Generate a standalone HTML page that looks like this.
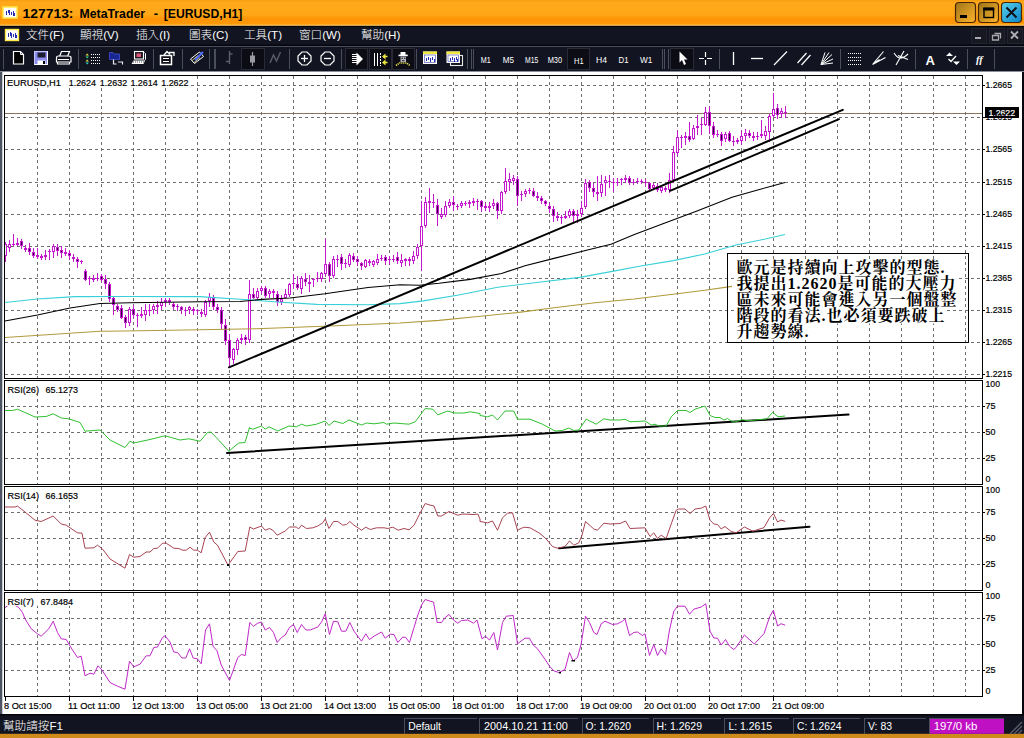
<!DOCTYPE html>
<html lang="zh-Hant"><head><meta charset="utf-8"><title>127713: MetaTrader - [EURUSD,H1]</title>
<style>
html,body{margin:0;padding:0;background:#121521;}
body{width:1024px;height:738px;overflow:hidden;position:relative;font-family:"Liberation Sans", "Noto Sans CJK TC", sans-serif;}
svg{position:absolute;left:0;top:0;display:block}
text{font-family:"Liberation Sans", "Noto Sans CJK TC", sans-serif;}
.ax{font-size:9.6px;fill:#000;stroke:#000;stroke-width:.2px}
.g{stroke:#6e6e6e;stroke-width:1;stroke-dasharray:3 3;shape-rendering:crispEdges;fill:none}
.b{stroke:#000;stroke-width:1;shape-rendering:crispEdges;fill:none}
.cw{fill:#c418cc;shape-rendering:crispEdges}
.ch{fill:#fff;stroke:#c418cc;stroke-width:1;shape-rendering:crispEdges}
.cf{fill:#c418cc;shape-rendering:crispEdges}
.ck{fill:#30003a;shape-rendering:crispEdges}
.tl{stroke:#000;stroke-width:2;stroke-linecap:round;fill:none}
.mn{font-size:11.6px;fill:#fff;font-weight:300}
.st{font-size:11.8px;fill:#fff}
.tf{font-size:9.6px;fill:#fff}
.sep{stroke:#4a4e5c;stroke-width:1;shape-rendering:crispEdges}
.note{font-family:"Liberation Serif","Noto Serif CJK SC",serif;font-weight:bold;font-size:16px;fill:#000;letter-spacing:1px}
</style></head><body>
<svg width="1024" height="738" viewBox="0 0 1024 738">
<defs>
<linearGradient id="tg" x1="0" y1="0" x2="0" y2="1"><stop offset="0" stop-color="#f79e10"/><stop offset="0.1" stop-color="#ffa91b"/><stop offset="0.6" stop-color="#ffa717"/><stop offset="0.68" stop-color="#fe9b0b"/><stop offset="0.78" stop-color="#fd9506"/><stop offset="1" stop-color="#ff9a08"/></linearGradient>
<linearGradient id="bg1" x1="0" y1="0" x2="1" y2="1"><stop offset="0" stop-color="#9c7418"/><stop offset="1" stop-color="#ffb42c"/></linearGradient>
<linearGradient id="bg2" x1="0" y1="0" x2="1" y2="1"><stop offset="0" stop-color="#58d0e8"/><stop offset="1" stop-color="#0c86cc"/></linearGradient>
</defs>

<rect x="0" y="0" width="1024" height="738" fill="#121521"/>
<rect x="0" y="0" width="1024" height="25" fill="url(#tg)"/><rect x="0" y="24.600" width="1024" height="1.300" fill="#ffc864"/><rect x="0" y="25.900" width="1024" height="1.100" fill="#050506"/>
<rect x="0" y="71" width="1024" height="643" fill="#fff"/>
<rect x="0" y="71" width="2" height="643" fill="#4e5464"/>
<rect x="2" y="71" width="1" height="643" fill="#c8ccd4"/>
<rect x="1022" y="71" width="2" height="643" fill="#06070c"/>
<rect x="0" y="71" width="1024" height="1" fill="#8a8e98"/>
<rect x="0" y="714" width="1024" height="20" fill="#121521"/>
<rect x="0" y="714" width="1024" height="1.500" fill="#050508"/><rect x="0" y="733.800" width="1024" height="5" fill="#cf8a1c"/>
<line class="g" x1="37.5" y1="76" x2="37.5" y2="378"/>
<line class="g" x1="69.5" y1="76" x2="69.5" y2="378"/>
<line class="g" x1="101.5" y1="76" x2="101.5" y2="378"/>
<line class="g" x1="133.5" y1="76" x2="133.5" y2="378"/>
<line class="g" x1="165.5" y1="76" x2="165.5" y2="378"/>
<line class="g" x1="197.5" y1="76" x2="197.5" y2="378"/>
<line class="g" x1="229.5" y1="76" x2="229.5" y2="378"/>
<line class="g" x1="261.5" y1="76" x2="261.5" y2="378"/>
<line class="g" x1="293.5" y1="76" x2="293.5" y2="378"/>
<line class="g" x1="325.5" y1="76" x2="325.5" y2="378"/>
<line class="g" x1="357.5" y1="76" x2="357.5" y2="378"/>
<line class="g" x1="389.5" y1="76" x2="389.5" y2="378"/>
<line class="g" x1="421.5" y1="76" x2="421.5" y2="378"/>
<line class="g" x1="453.5" y1="76" x2="453.5" y2="378"/>
<line class="g" x1="485.5" y1="76" x2="485.5" y2="378"/>
<line class="g" x1="517.5" y1="76" x2="517.5" y2="378"/>
<line class="g" x1="549.5" y1="76" x2="549.5" y2="378"/>
<line class="g" x1="581.5" y1="76" x2="581.5" y2="378"/>
<line class="g" x1="613.5" y1="76" x2="613.5" y2="378"/>
<line class="g" x1="645.5" y1="76" x2="645.5" y2="378"/>
<line class="g" x1="677.5" y1="76" x2="677.5" y2="378"/>
<line class="g" x1="709.5" y1="76" x2="709.5" y2="378"/>
<line class="g" x1="741.5" y1="76" x2="741.5" y2="378"/>
<line class="g" x1="773.5" y1="76" x2="773.5" y2="378"/>
<line class="g" x1="805.5" y1="76" x2="805.5" y2="378"/>
<line class="g" x1="837.5" y1="76" x2="837.5" y2="378"/>
<line class="g" x1="869.5" y1="76" x2="869.5" y2="378"/>
<line class="g" x1="901.5" y1="76" x2="901.5" y2="378"/>
<line class="g" x1="933.5" y1="76" x2="933.5" y2="378"/>
<line class="g" x1="965.5" y1="76" x2="965.5" y2="378"/>
<line class="g" x1="5" y1="85.5" x2="982" y2="85.5"/>
<line class="g" x1="5" y1="117.5" x2="982" y2="117.5"/>
<line class="g" x1="5" y1="149.5" x2="982" y2="149.5"/>
<line class="g" x1="5" y1="182.5" x2="982" y2="182.5"/>
<line class="g" x1="5" y1="214.5" x2="982" y2="214.5"/>
<line class="g" x1="5" y1="246.5" x2="982" y2="246.5"/>
<line class="g" x1="5" y1="278.5" x2="982" y2="278.5"/>
<line class="g" x1="5" y1="310.5" x2="982" y2="310.5"/>
<line class="g" x1="5" y1="342.5" x2="982" y2="342.5"/>
<line class="g" x1="5" y1="374.5" x2="982" y2="374.5"/>
<line class="g" x1="37.5" y1="381" x2="37.5" y2="484"/>
<line class="g" x1="69.5" y1="381" x2="69.5" y2="484"/>
<line class="g" x1="101.5" y1="381" x2="101.5" y2="484"/>
<line class="g" x1="133.5" y1="381" x2="133.5" y2="484"/>
<line class="g" x1="165.5" y1="381" x2="165.5" y2="484"/>
<line class="g" x1="197.5" y1="381" x2="197.5" y2="484"/>
<line class="g" x1="229.5" y1="381" x2="229.5" y2="484"/>
<line class="g" x1="261.5" y1="381" x2="261.5" y2="484"/>
<line class="g" x1="293.5" y1="381" x2="293.5" y2="484"/>
<line class="g" x1="325.5" y1="381" x2="325.5" y2="484"/>
<line class="g" x1="357.5" y1="381" x2="357.5" y2="484"/>
<line class="g" x1="389.5" y1="381" x2="389.5" y2="484"/>
<line class="g" x1="421.5" y1="381" x2="421.5" y2="484"/>
<line class="g" x1="453.5" y1="381" x2="453.5" y2="484"/>
<line class="g" x1="485.5" y1="381" x2="485.5" y2="484"/>
<line class="g" x1="517.5" y1="381" x2="517.5" y2="484"/>
<line class="g" x1="549.5" y1="381" x2="549.5" y2="484"/>
<line class="g" x1="581.5" y1="381" x2="581.5" y2="484"/>
<line class="g" x1="613.5" y1="381" x2="613.5" y2="484"/>
<line class="g" x1="645.5" y1="381" x2="645.5" y2="484"/>
<line class="g" x1="677.5" y1="381" x2="677.5" y2="484"/>
<line class="g" x1="709.5" y1="381" x2="709.5" y2="484"/>
<line class="g" x1="741.5" y1="381" x2="741.5" y2="484"/>
<line class="g" x1="773.5" y1="381" x2="773.5" y2="484"/>
<line class="g" x1="805.5" y1="381" x2="805.5" y2="484"/>
<line class="g" x1="837.5" y1="381" x2="837.5" y2="484"/>
<line class="g" x1="869.5" y1="381" x2="869.5" y2="484"/>
<line class="g" x1="901.5" y1="381" x2="901.5" y2="484"/>
<line class="g" x1="933.5" y1="381" x2="933.5" y2="484"/>
<line class="g" x1="965.5" y1="381" x2="965.5" y2="484"/>
<line class="g" x1="5" y1="406.5" x2="982" y2="406.5"/>
<line class="g" x1="5" y1="432.5" x2="982" y2="432.5"/>
<line class="g" x1="5" y1="458.5" x2="982" y2="458.5"/>
<line class="g" x1="37.5" y1="487" x2="37.5" y2="590"/>
<line class="g" x1="69.5" y1="487" x2="69.5" y2="590"/>
<line class="g" x1="101.5" y1="487" x2="101.5" y2="590"/>
<line class="g" x1="133.5" y1="487" x2="133.5" y2="590"/>
<line class="g" x1="165.5" y1="487" x2="165.5" y2="590"/>
<line class="g" x1="197.5" y1="487" x2="197.5" y2="590"/>
<line class="g" x1="229.5" y1="487" x2="229.5" y2="590"/>
<line class="g" x1="261.5" y1="487" x2="261.5" y2="590"/>
<line class="g" x1="293.5" y1="487" x2="293.5" y2="590"/>
<line class="g" x1="325.5" y1="487" x2="325.5" y2="590"/>
<line class="g" x1="357.5" y1="487" x2="357.5" y2="590"/>
<line class="g" x1="389.5" y1="487" x2="389.5" y2="590"/>
<line class="g" x1="421.5" y1="487" x2="421.5" y2="590"/>
<line class="g" x1="453.5" y1="487" x2="453.5" y2="590"/>
<line class="g" x1="485.5" y1="487" x2="485.5" y2="590"/>
<line class="g" x1="517.5" y1="487" x2="517.5" y2="590"/>
<line class="g" x1="549.5" y1="487" x2="549.5" y2="590"/>
<line class="g" x1="581.5" y1="487" x2="581.5" y2="590"/>
<line class="g" x1="613.5" y1="487" x2="613.5" y2="590"/>
<line class="g" x1="645.5" y1="487" x2="645.5" y2="590"/>
<line class="g" x1="677.5" y1="487" x2="677.5" y2="590"/>
<line class="g" x1="709.5" y1="487" x2="709.5" y2="590"/>
<line class="g" x1="741.5" y1="487" x2="741.5" y2="590"/>
<line class="g" x1="773.5" y1="487" x2="773.5" y2="590"/>
<line class="g" x1="805.5" y1="487" x2="805.5" y2="590"/>
<line class="g" x1="837.5" y1="487" x2="837.5" y2="590"/>
<line class="g" x1="869.5" y1="487" x2="869.5" y2="590"/>
<line class="g" x1="901.5" y1="487" x2="901.5" y2="590"/>
<line class="g" x1="933.5" y1="487" x2="933.5" y2="590"/>
<line class="g" x1="965.5" y1="487" x2="965.5" y2="590"/>
<line class="g" x1="5" y1="512.5" x2="982" y2="512.5"/>
<line class="g" x1="5" y1="538.5" x2="982" y2="538.5"/>
<line class="g" x1="5" y1="564.5" x2="982" y2="564.5"/>
<line class="g" x1="37.5" y1="593" x2="37.5" y2="696"/>
<line class="g" x1="69.5" y1="593" x2="69.5" y2="696"/>
<line class="g" x1="101.5" y1="593" x2="101.5" y2="696"/>
<line class="g" x1="133.5" y1="593" x2="133.5" y2="696"/>
<line class="g" x1="165.5" y1="593" x2="165.5" y2="696"/>
<line class="g" x1="197.5" y1="593" x2="197.5" y2="696"/>
<line class="g" x1="229.5" y1="593" x2="229.5" y2="696"/>
<line class="g" x1="261.5" y1="593" x2="261.5" y2="696"/>
<line class="g" x1="293.5" y1="593" x2="293.5" y2="696"/>
<line class="g" x1="325.5" y1="593" x2="325.5" y2="696"/>
<line class="g" x1="357.5" y1="593" x2="357.5" y2="696"/>
<line class="g" x1="389.5" y1="593" x2="389.5" y2="696"/>
<line class="g" x1="421.5" y1="593" x2="421.5" y2="696"/>
<line class="g" x1="453.5" y1="593" x2="453.5" y2="696"/>
<line class="g" x1="485.5" y1="593" x2="485.5" y2="696"/>
<line class="g" x1="517.5" y1="593" x2="517.5" y2="696"/>
<line class="g" x1="549.5" y1="593" x2="549.5" y2="696"/>
<line class="g" x1="581.5" y1="593" x2="581.5" y2="696"/>
<line class="g" x1="613.5" y1="593" x2="613.5" y2="696"/>
<line class="g" x1="645.5" y1="593" x2="645.5" y2="696"/>
<line class="g" x1="677.5" y1="593" x2="677.5" y2="696"/>
<line class="g" x1="709.5" y1="593" x2="709.5" y2="696"/>
<line class="g" x1="741.5" y1="593" x2="741.5" y2="696"/>
<line class="g" x1="773.5" y1="593" x2="773.5" y2="696"/>
<line class="g" x1="805.5" y1="593" x2="805.5" y2="696"/>
<line class="g" x1="837.5" y1="593" x2="837.5" y2="696"/>
<line class="g" x1="869.5" y1="593" x2="869.5" y2="696"/>
<line class="g" x1="901.5" y1="593" x2="901.5" y2="696"/>
<line class="g" x1="933.5" y1="593" x2="933.5" y2="696"/>
<line class="g" x1="965.5" y1="593" x2="965.5" y2="696"/>
<line class="g" x1="5" y1="618.5" x2="982" y2="618.5"/>
<line class="g" x1="5" y1="644.5" x2="982" y2="644.5"/>
<line class="g" x1="5" y1="670.5" x2="982" y2="670.5"/>
<line x1="5" y1="113.5" x2="982" y2="113.5" stroke="#8a7460" stroke-width="1" shape-rendering="crispEdges"/>
<rect class="cw" x="5" y="242" width="1" height="20"/>
<rect class="ch" x="4.5" y="244.5" width="2" height="11"/>
<rect class="cw" x="9" y="240" width="1" height="12"/>
<rect class="ch" x="8.5" y="244.5" width="2" height="3"/>
<rect class="cw" x="13" y="234" width="1" height="13"/>
<rect class="cf" x="12" y="244" width="3" height="1"/>
<rect class="cw" x="17" y="238" width="1" height="8"/>
<rect class="cf" x="16" y="243" width="3" height="2"/>
<rect class="cw" x="21" y="239" width="1" height="10"/>
<rect class="cf" x="20" y="241" width="3" height="5"/>
<rect class="ck" x="21" y="242" width="1" height="3"/>
<rect class="cw" x="25" y="245" width="1" height="7"/>
<rect class="cf" x="24" y="248" width="3" height="2"/>
<rect class="cw" x="29" y="243" width="1" height="12"/>
<rect class="cf" x="28" y="248" width="3" height="4"/>
<rect class="ck" x="29" y="249" width="1" height="2"/>
<rect class="cw" x="33" y="248" width="1" height="10"/>
<rect class="cf" x="32" y="252" width="3" height="4"/>
<rect class="ck" x="33" y="253" width="1" height="2"/>
<rect class="cw" x="37" y="248" width="1" height="11"/>
<rect class="cf" x="36" y="255" width="3" height="2"/>
<rect class="cw" x="41" y="254" width="1" height="6"/>
<rect class="cf" x="40" y="256" width="3" height="2"/>
<rect class="cw" x="45" y="250" width="1" height="10"/>
<rect class="cf" x="44" y="255" width="3" height="2"/>
<rect class="cw" x="49" y="249" width="1" height="11"/>
<rect class="cf" x="48" y="251" width="3" height="1"/>
<rect class="cw" x="53" y="244" width="1" height="14"/>
<rect class="ch" x="52.5" y="246.5" width="2" height="5"/>
<rect class="cw" x="57" y="244" width="1" height="12"/>
<rect class="cf" x="56" y="247" width="3" height="4"/>
<rect class="ck" x="57" y="248" width="1" height="2"/>
<rect class="cw" x="61" y="246" width="1" height="12"/>
<rect class="cf" x="60" y="250" width="3" height="3"/>
<rect class="ck" x="61" y="251" width="1" height="1"/>
<rect class="cw" x="65" y="248" width="1" height="8"/>
<rect class="cf" x="64" y="252" width="3" height="2"/>
<rect class="cw" x="69" y="250" width="1" height="10"/>
<rect class="cf" x="68" y="253" width="3" height="3"/>
<rect class="ck" x="69" y="254" width="1" height="1"/>
<rect class="cw" x="73" y="254" width="1" height="8"/>
<rect class="cf" x="72" y="257" width="3" height="2"/>
<rect class="cw" x="77" y="257" width="1" height="11"/>
<rect class="cf" x="76" y="259" width="3" height="3"/>
<rect class="ck" x="77" y="260" width="1" height="1"/>
<rect class="cw" x="81" y="260" width="1" height="4"/>
<rect class="cf" x="80" y="261" width="3" height="1"/>
<rect class="cw" x="85" y="269" width="1" height="12"/>
<rect class="cf" x="84" y="271" width="3" height="9"/>
<rect class="ck" x="85" y="272" width="1" height="7"/>
<rect class="cw" x="89" y="276" width="1" height="9"/>
<rect class="cf" x="88" y="278" width="3" height="1"/>
<rect class="cw" x="93" y="275" width="1" height="7"/>
<rect class="cf" x="92" y="278" width="3" height="2"/>
<rect class="cw" x="97" y="273" width="1" height="8"/>
<rect class="cf" x="96" y="278" width="3" height="1"/>
<rect class="cw" x="101" y="274" width="1" height="8"/>
<rect class="cf" x="100" y="276" width="3" height="4"/>
<rect class="ck" x="101" y="277" width="1" height="2"/>
<rect class="cw" x="105" y="275" width="1" height="14"/>
<rect class="cf" x="104" y="279" width="3" height="5"/>
<rect class="ck" x="105" y="280" width="1" height="3"/>
<rect class="cw" x="109" y="282" width="1" height="20"/>
<rect class="cf" x="108" y="284" width="3" height="15"/>
<rect class="ck" x="109" y="285" width="1" height="13"/>
<rect class="cw" x="113" y="297" width="1" height="18"/>
<rect class="cf" x="112" y="298" width="3" height="7"/>
<rect class="ck" x="113" y="299" width="1" height="5"/>
<rect class="cw" x="117" y="304" width="1" height="8"/>
<rect class="cf" x="116" y="306" width="3" height="4"/>
<rect class="ck" x="117" y="307" width="1" height="2"/>
<rect class="cw" x="121" y="305" width="1" height="14"/>
<rect class="cf" x="120" y="308" width="3" height="10"/>
<rect class="ck" x="121" y="309" width="1" height="8"/>
<rect class="cw" x="125" y="315" width="1" height="13"/>
<rect class="cf" x="124" y="317" width="3" height="6"/>
<rect class="ck" x="125" y="318" width="1" height="4"/>
<rect class="cw" x="129" y="307" width="1" height="19"/>
<rect class="ch" x="128.5" y="309.5" width="2" height="13"/>
<rect class="cw" x="133" y="305" width="1" height="13"/>
<rect class="cf" x="132" y="309" width="3" height="6"/>
<rect class="ck" x="133" y="310" width="1" height="4"/>
<rect class="cw" x="137" y="313" width="1" height="14"/>
<rect class="cf" x="136" y="315" width="3" height="1"/>
<rect class="cw" x="141" y="307" width="1" height="11"/>
<rect class="cf" x="140" y="314" width="3" height="2"/>
<rect class="cw" x="145" y="304" width="1" height="17"/>
<rect class="ch" x="144.5" y="310.5" width="2" height="4"/>
<rect class="cw" x="149" y="304" width="1" height="12"/>
<rect class="cf" x="148" y="310" width="3" height="1"/>
<rect class="cw" x="153" y="304" width="1" height="10"/>
<rect class="ch" x="152.5" y="306.5" width="2" height="3"/>
<rect class="cw" x="157" y="301" width="1" height="13"/>
<rect class="cf" x="156" y="305" width="3" height="2"/>
<rect class="cw" x="161" y="298" width="1" height="12"/>
<rect class="ch" x="160.5" y="302.5" width="2" height="3"/>
<rect class="cw" x="165" y="298" width="1" height="9"/>
<rect class="cf" x="164" y="300" width="3" height="2"/>
<rect class="cw" x="169" y="298" width="1" height="7"/>
<rect class="cf" x="168" y="300" width="3" height="2"/>
<rect class="cw" x="173" y="302" width="1" height="8"/>
<rect class="cf" x="172" y="304" width="3" height="3"/>
<rect class="ck" x="173" y="305" width="1" height="1"/>
<rect class="cw" x="177" y="304" width="1" height="7"/>
<rect class="cf" x="176" y="306" width="3" height="1"/>
<rect class="cw" x="181" y="306" width="1" height="8"/>
<rect class="cf" x="180" y="307" width="3" height="3"/>
<rect class="ck" x="181" y="308" width="1" height="1"/>
<rect class="cw" x="185" y="307" width="1" height="9"/>
<rect class="cf" x="184" y="310" width="3" height="1"/>
<rect class="cw" x="189" y="306" width="1" height="8"/>
<rect class="ch" x="188.5" y="307.5" width="2" height="2"/>
<rect class="cw" x="193" y="307" width="1" height="8"/>
<rect class="cf" x="192" y="309" width="3" height="2"/>
<rect class="cw" x="197" y="309" width="1" height="6"/>
<rect class="cf" x="196" y="310" width="3" height="1"/>
<rect class="cw" x="201" y="309" width="1" height="8"/>
<rect class="cf" x="200" y="312" width="3" height="2"/>
<rect class="cw" x="205" y="300" width="1" height="17"/>
<rect class="ch" x="204.5" y="302.5" width="2" height="12"/>
<rect class="cw" x="209" y="293" width="1" height="14"/>
<rect class="ch" x="208.5" y="297.5" width="2" height="3"/>
<rect class="cw" x="213" y="295" width="1" height="15"/>
<rect class="cf" x="212" y="298" width="3" height="9"/>
<rect class="ck" x="213" y="299" width="1" height="7"/>
<rect class="cw" x="217" y="304" width="1" height="9"/>
<rect class="cf" x="216" y="307" width="3" height="3"/>
<rect class="ck" x="217" y="308" width="1" height="1"/>
<rect class="cw" x="221" y="307" width="1" height="22"/>
<rect class="cf" x="220" y="310" width="3" height="14"/>
<rect class="ck" x="221" y="311" width="1" height="12"/>
<rect class="cw" x="225" y="319" width="1" height="26"/>
<rect class="cf" x="224" y="325" width="3" height="16"/>
<rect class="ck" x="225" y="326" width="1" height="14"/>
<rect class="cw" x="229" y="334" width="1" height="32"/>
<rect class="cf" x="228" y="340" width="3" height="18"/>
<rect class="ck" x="229" y="341" width="1" height="16"/>
<rect class="cw" x="233" y="348" width="1" height="16"/>
<rect class="ch" x="232.5" y="349.5" width="2" height="10"/>
<rect class="cw" x="237" y="338" width="1" height="17"/>
<rect class="ch" x="236.5" y="340.5" width="2" height="9"/>
<rect class="cw" x="241" y="334" width="1" height="10"/>
<rect class="cf" x="240" y="338" width="3" height="2"/>
<rect class="cw" x="245" y="335" width="1" height="10"/>
<rect class="cf" x="244" y="337" width="3" height="3"/>
<rect class="ck" x="245" y="338" width="1" height="1"/>
<rect class="cw" x="249" y="280" width="1" height="63"/>
<rect class="ch" x="248.5" y="294.5" width="2" height="45"/>
<rect class="cw" x="253" y="288" width="1" height="11"/>
<rect class="cf" x="252" y="294" width="3" height="4"/>
<rect class="ck" x="253" y="295" width="1" height="2"/>
<rect class="cw" x="257" y="288" width="1" height="11"/>
<rect class="ch" x="256.5" y="291.5" width="2" height="6"/>
<rect class="cw" x="261" y="286" width="1" height="8"/>
<rect class="ch" x="260.5" y="288.5" width="2" height="2"/>
<rect class="cw" x="265" y="286" width="1" height="12"/>
<rect class="cf" x="264" y="288" width="3" height="8"/>
<rect class="ck" x="265" y="289" width="1" height="6"/>
<rect class="cw" x="269" y="289" width="1" height="9"/>
<rect class="ch" x="268.5" y="291.5" width="2" height="2"/>
<rect class="cw" x="273" y="289" width="1" height="9"/>
<rect class="cf" x="272" y="291" width="3" height="2"/>
<rect class="cw" x="277" y="291" width="1" height="15"/>
<rect class="cf" x="276" y="294" width="3" height="8"/>
<rect class="ck" x="277" y="295" width="1" height="6"/>
<rect class="cw" x="281" y="295" width="1" height="10"/>
<rect class="ch" x="280.5" y="299.5" width="2" height="2"/>
<rect class="cw" x="285" y="289" width="1" height="9"/>
<rect class="ch" x="284.5" y="294.5" width="2" height="3"/>
<rect class="cw" x="289" y="283" width="1" height="14"/>
<rect class="ch" x="288.5" y="284.5" width="2" height="10"/>
<rect class="cw" x="293" y="274" width="1" height="15"/>
<rect class="cf" x="292" y="283" width="3" height="1"/>
<rect class="cw" x="297" y="276" width="1" height="14"/>
<rect class="cf" x="296" y="284" width="3" height="4"/>
<rect class="ck" x="297" y="285" width="1" height="2"/>
<rect class="cw" x="301" y="276" width="1" height="18"/>
<rect class="ch" x="300.5" y="278.5" width="2" height="10"/>
<rect class="cw" x="305" y="273" width="1" height="13"/>
<rect class="cf" x="304" y="279" width="3" height="3"/>
<rect class="ck" x="305" y="280" width="1" height="1"/>
<rect class="cw" x="309" y="275" width="1" height="17"/>
<rect class="cf" x="308" y="282" width="3" height="2"/>
<rect class="cw" x="313" y="278" width="1" height="9"/>
<rect class="cf" x="312" y="279" width="3" height="1"/>
<rect class="cw" x="317" y="272" width="1" height="10"/>
<rect class="cf" x="316" y="278" width="3" height="1"/>
<rect class="cw" x="321" y="272" width="1" height="10"/>
<rect class="ch" x="320.5" y="273.5" width="2" height="5"/>
<rect class="cw" x="325" y="239" width="1" height="37"/>
<rect class="ch" x="324.5" y="264.5" width="2" height="9"/>
<rect class="cw" x="329" y="262" width="1" height="20"/>
<rect class="cf" x="328" y="264" width="3" height="12"/>
<rect class="ck" x="329" y="265" width="1" height="10"/>
<rect class="cw" x="333" y="256" width="1" height="22"/>
<rect class="ch" x="332.5" y="259.5" width="2" height="16"/>
<rect class="cw" x="337" y="255" width="1" height="12"/>
<rect class="cf" x="336" y="259" width="3" height="1"/>
<rect class="cw" x="341" y="254" width="1" height="16"/>
<rect class="cf" x="340" y="257" width="3" height="7"/>
<rect class="ck" x="341" y="258" width="1" height="5"/>
<rect class="cw" x="345" y="259" width="1" height="9"/>
<rect class="cf" x="344" y="263" width="3" height="1"/>
<rect class="cw" x="349" y="253" width="1" height="14"/>
<rect class="ch" x="348.5" y="255.5" width="2" height="9"/>
<rect class="cw" x="353" y="253" width="1" height="9"/>
<rect class="cf" x="352" y="256" width="3" height="4"/>
<rect class="ck" x="353" y="257" width="1" height="2"/>
<rect class="cw" x="357" y="256" width="1" height="10"/>
<rect class="cf" x="356" y="259" width="3" height="3"/>
<rect class="ck" x="357" y="260" width="1" height="1"/>
<rect class="cw" x="361" y="262" width="1" height="8"/>
<rect class="cf" x="360" y="263" width="3" height="3"/>
<rect class="ck" x="361" y="264" width="1" height="1"/>
<rect class="cw" x="365" y="259" width="1" height="9"/>
<rect class="ch" x="364.5" y="260.5" width="2" height="6"/>
<rect class="cw" x="369" y="259" width="1" height="7"/>
<rect class="cf" x="368" y="261" width="3" height="2"/>
<rect class="cw" x="373" y="260" width="1" height="7"/>
<rect class="ch" x="372.5" y="261.5" width="2" height="3"/>
<rect class="cw" x="377" y="254" width="1" height="11"/>
<rect class="ch" x="376.5" y="259.5" width="2" height="3"/>
<rect class="cw" x="381" y="255" width="1" height="6"/>
<rect class="cf" x="380" y="258" width="3" height="1"/>
<rect class="cw" x="385" y="255" width="1" height="10"/>
<rect class="cf" x="384" y="257" width="3" height="4"/>
<rect class="ck" x="385" y="258" width="1" height="2"/>
<rect class="cw" x="389" y="256" width="1" height="9"/>
<rect class="cf" x="388" y="259" width="3" height="1"/>
<rect class="cw" x="393" y="255" width="1" height="7"/>
<rect class="cf" x="392" y="259" width="3" height="1"/>
<rect class="cw" x="397" y="252" width="1" height="12"/>
<rect class="cf" x="396" y="257" width="3" height="4"/>
<rect class="ck" x="397" y="258" width="1" height="2"/>
<rect class="cw" x="401" y="254" width="1" height="13"/>
<rect class="ch" x="400.5" y="260.5" width="2" height="2"/>
<rect class="cw" x="405" y="258" width="1" height="8"/>
<rect class="cf" x="404" y="259" width="3" height="2"/>
<rect class="cw" x="409" y="257" width="1" height="9"/>
<rect class="cf" x="408" y="259" width="3" height="2"/>
<rect class="cw" x="413" y="251" width="1" height="13"/>
<rect class="ch" x="412.5" y="256.5" width="2" height="4"/>
<rect class="cw" x="417" y="244" width="1" height="15"/>
<rect class="ch" x="416.5" y="247.5" width="2" height="8"/>
<rect class="cw" x="421" y="201" width="1" height="70"/>
<rect class="ch" x="420.5" y="226.5" width="2" height="19"/>
<rect class="cw" x="425" y="197" width="1" height="31"/>
<rect class="ch" x="424.5" y="202.5" width="2" height="23"/>
<rect class="cw" x="429" y="188" width="1" height="25"/>
<rect class="cf" x="428" y="201" width="3" height="2"/>
<rect class="cw" x="433" y="194" width="1" height="14"/>
<rect class="cf" x="432" y="202" width="3" height="1"/>
<rect class="cw" x="437" y="199" width="1" height="27"/>
<rect class="cf" x="436" y="205" width="3" height="9"/>
<rect class="ck" x="437" y="206" width="1" height="7"/>
<rect class="cw" x="441" y="208" width="1" height="11"/>
<rect class="ch" x="440.5" y="214.5" width="2" height="2"/>
<rect class="cw" x="445" y="201" width="1" height="16"/>
<rect class="ch" x="444.5" y="206.5" width="2" height="8"/>
<rect class="cw" x="449" y="199" width="1" height="9"/>
<rect class="ch" x="448.5" y="202.5" width="2" height="3"/>
<rect class="cw" x="453" y="196" width="1" height="15"/>
<rect class="cf" x="452" y="202" width="3" height="3"/>
<rect class="ck" x="453" y="203" width="1" height="1"/>
<rect class="cw" x="457" y="204" width="1" height="6"/>
<rect class="cf" x="456" y="206" width="3" height="1"/>
<rect class="cw" x="461" y="201" width="1" height="7"/>
<rect class="ch" x="460.5" y="203.5" width="2" height="2"/>
<rect class="cw" x="465" y="201" width="1" height="5"/>
<rect class="cf" x="464" y="203" width="3" height="1"/>
<rect class="cw" x="469" y="200" width="1" height="8"/>
<rect class="cf" x="468" y="202" width="3" height="2"/>
<rect class="cw" x="473" y="198" width="1" height="8"/>
<rect class="cf" x="472" y="201" width="3" height="2"/>
<rect class="cw" x="477" y="199" width="1" height="11"/>
<rect class="cf" x="476" y="201" width="3" height="1"/>
<rect class="cw" x="481" y="200" width="1" height="12"/>
<rect class="cf" x="480" y="201" width="3" height="6"/>
<rect class="ck" x="481" y="202" width="1" height="4"/>
<rect class="cw" x="485" y="203" width="1" height="8"/>
<rect class="cf" x="484" y="206" width="3" height="2"/>
<rect class="cw" x="489" y="202" width="1" height="10"/>
<rect class="cf" x="488" y="206" width="3" height="2"/>
<rect class="cw" x="493" y="199" width="1" height="10"/>
<rect class="ch" x="492.5" y="203.5" width="2" height="2"/>
<rect class="cw" x="497" y="202" width="1" height="17"/>
<rect class="cf" x="496" y="203" width="3" height="8"/>
<rect class="ck" x="497" y="204" width="1" height="6"/>
<rect class="cw" x="501" y="191" width="1" height="23"/>
<rect class="ch" x="500.5" y="192.5" width="2" height="18"/>
<rect class="cw" x="505" y="168" width="1" height="26"/>
<rect class="ch" x="504.5" y="181.5" width="2" height="10"/>
<rect class="cw" x="509" y="173" width="1" height="18"/>
<rect class="ch" x="508.5" y="179.5" width="2" height="2"/>
<rect class="cw" x="513" y="175" width="1" height="10"/>
<rect class="ch" x="512.5" y="178.5" width="2" height="2"/>
<rect class="cw" x="517" y="176" width="1" height="30"/>
<rect class="cf" x="516" y="179" width="3" height="17"/>
<rect class="ck" x="517" y="180" width="1" height="15"/>
<rect class="cw" x="521" y="191" width="1" height="10"/>
<rect class="cf" x="520" y="194" width="3" height="1"/>
<rect class="cw" x="525" y="189" width="1" height="8"/>
<rect class="ch" x="524.5" y="191.5" width="2" height="2"/>
<rect class="cw" x="529" y="188" width="1" height="6"/>
<rect class="cf" x="528" y="190" width="3" height="1"/>
<rect class="cw" x="533" y="188" width="1" height="9"/>
<rect class="cf" x="532" y="191" width="3" height="5"/>
<rect class="ck" x="533" y="192" width="1" height="3"/>
<rect class="cw" x="537" y="192" width="1" height="9"/>
<rect class="cf" x="536" y="196" width="3" height="2"/>
<rect class="cw" x="541" y="196" width="1" height="8"/>
<rect class="cf" x="540" y="198" width="3" height="3"/>
<rect class="ck" x="541" y="199" width="1" height="1"/>
<rect class="cw" x="545" y="200" width="1" height="6"/>
<rect class="cf" x="544" y="201" width="3" height="3"/>
<rect class="ck" x="545" y="202" width="1" height="1"/>
<rect class="cw" x="549" y="203" width="1" height="10"/>
<rect class="cf" x="548" y="206" width="3" height="3"/>
<rect class="ck" x="549" y="207" width="1" height="1"/>
<rect class="cw" x="553" y="206" width="1" height="16"/>
<rect class="cf" x="552" y="209" width="3" height="7"/>
<rect class="ck" x="553" y="210" width="1" height="5"/>
<rect class="cw" x="557" y="212" width="1" height="9"/>
<rect class="cf" x="556" y="216" width="3" height="2"/>
<rect class="cw" x="561" y="215" width="1" height="9"/>
<rect class="cf" x="560" y="217" width="3" height="1"/>
<rect class="cw" x="565" y="211" width="1" height="8"/>
<rect class="cf" x="564" y="216" width="3" height="2"/>
<rect class="cw" x="569" y="209" width="1" height="9"/>
<rect class="ch" x="568.5" y="211.5" width="2" height="4"/>
<rect class="cw" x="573" y="209" width="1" height="13"/>
<rect class="cf" x="572" y="211" width="3" height="5"/>
<rect class="ck" x="573" y="212" width="1" height="3"/>
<rect class="cw" x="577" y="210" width="1" height="13"/>
<rect class="cf" x="576" y="214" width="3" height="2"/>
<rect class="cw" x="581" y="201" width="1" height="16"/>
<rect class="ch" x="580.5" y="208.5" width="2" height="5"/>
<rect class="cw" x="585" y="179" width="1" height="30"/>
<rect class="ch" x="584.5" y="183.5" width="2" height="23"/>
<rect class="cw" x="589" y="180" width="1" height="12"/>
<rect class="cf" x="588" y="182" width="3" height="6"/>
<rect class="ck" x="589" y="183" width="1" height="4"/>
<rect class="cw" x="593" y="183" width="1" height="14"/>
<rect class="cf" x="592" y="188" width="3" height="4"/>
<rect class="ck" x="593" y="189" width="1" height="2"/>
<rect class="cw" x="597" y="176" width="1" height="25"/>
<rect class="cf" x="596" y="192" width="3" height="2"/>
<rect class="cw" x="601" y="175" width="1" height="22"/>
<rect class="ch" x="600.5" y="184.5" width="2" height="8"/>
<rect class="cw" x="605" y="176" width="1" height="20"/>
<rect class="ch" x="604.5" y="180.5" width="2" height="2"/>
<rect class="cw" x="609" y="175" width="1" height="13"/>
<rect class="cf" x="608" y="181" width="3" height="1"/>
<rect class="cw" x="613" y="178" width="1" height="14"/>
<rect class="cf" x="612" y="182" width="3" height="1"/>
<rect class="cw" x="617" y="178" width="1" height="8"/>
<rect class="cf" x="616" y="182" width="3" height="1"/>
<rect class="cw" x="621" y="178" width="1" height="7"/>
<rect class="cf" x="620" y="179" width="3" height="1"/>
<rect class="cw" x="625" y="175" width="1" height="8"/>
<rect class="cf" x="624" y="178" width="3" height="2"/>
<rect class="cw" x="629" y="176" width="1" height="9"/>
<rect class="cf" x="628" y="178" width="3" height="5"/>
<rect class="ck" x="629" y="179" width="1" height="3"/>
<rect class="cw" x="633" y="179" width="1" height="6"/>
<rect class="cf" x="632" y="182" width="3" height="1"/>
<rect class="cw" x="637" y="178" width="1" height="6"/>
<rect class="cf" x="636" y="181" width="3" height="1"/>
<rect class="cw" x="641" y="179" width="1" height="5"/>
<rect class="cf" x="640" y="181" width="3" height="1"/>
<rect class="cw" x="645" y="179" width="1" height="7"/>
<rect class="cf" x="644" y="182" width="3" height="1"/>
<rect class="cw" x="649" y="182" width="1" height="9"/>
<rect class="cf" x="648" y="183" width="3" height="6"/>
<rect class="ck" x="649" y="184" width="1" height="4"/>
<rect class="cw" x="653" y="183" width="1" height="6"/>
<rect class="ch" x="652.5" y="185.5" width="2" height="2"/>
<rect class="cw" x="657" y="183" width="1" height="9"/>
<rect class="cf" x="656" y="186" width="3" height="4"/>
<rect class="ck" x="657" y="187" width="1" height="2"/>
<rect class="cw" x="661" y="185" width="1" height="8"/>
<rect class="ch" x="660.5" y="187.5" width="2" height="3"/>
<rect class="cw" x="665" y="186" width="1" height="6"/>
<rect class="cf" x="664" y="188" width="3" height="2"/>
<rect class="cw" x="669" y="173" width="1" height="20"/>
<rect class="ch" x="668.5" y="180.5" width="2" height="9"/>
<rect class="cw" x="673" y="146" width="1" height="37"/>
<rect class="ch" x="672.5" y="152.5" width="2" height="27"/>
<rect class="cw" x="677" y="130" width="1" height="26"/>
<rect class="ch" x="676.5" y="137.5" width="2" height="15"/>
<rect class="cw" x="681" y="135" width="1" height="13"/>
<rect class="cf" x="680" y="137" width="3" height="1"/>
<rect class="cw" x="685" y="132" width="1" height="13"/>
<rect class="cf" x="684" y="136" width="3" height="2"/>
<rect class="cw" x="689" y="122" width="1" height="20"/>
<rect class="cf" x="688" y="136" width="3" height="4"/>
<rect class="ck" x="689" y="137" width="1" height="2"/>
<rect class="cw" x="693" y="125" width="1" height="15"/>
<rect class="ch" x="692.5" y="128.5" width="2" height="10"/>
<rect class="cw" x="697" y="115" width="1" height="20"/>
<rect class="cf" x="696" y="126" width="3" height="2"/>
<rect class="cw" x="701" y="118" width="1" height="17"/>
<rect class="cf" x="700" y="124" width="3" height="1"/>
<rect class="cw" x="705" y="107" width="1" height="19"/>
<rect class="ch" x="704.5" y="112.5" width="2" height="12"/>
<rect class="cw" x="709" y="106" width="1" height="28"/>
<rect class="cf" x="708" y="112" width="3" height="14"/>
<rect class="ck" x="709" y="113" width="1" height="12"/>
<rect class="cw" x="713" y="122" width="1" height="16"/>
<rect class="cf" x="712" y="126" width="3" height="9"/>
<rect class="ck" x="713" y="127" width="1" height="7"/>
<rect class="cw" x="717" y="130" width="1" height="7"/>
<rect class="cf" x="716" y="134" width="3" height="1"/>
<rect class="cw" x="721" y="132" width="1" height="14"/>
<rect class="cf" x="720" y="134" width="3" height="7"/>
<rect class="ck" x="721" y="135" width="1" height="5"/>
<rect class="cw" x="725" y="132" width="1" height="10"/>
<rect class="ch" x="724.5" y="134.5" width="2" height="4"/>
<rect class="cw" x="729" y="131" width="1" height="11"/>
<rect class="cf" x="728" y="133" width="3" height="8"/>
<rect class="ck" x="729" y="134" width="1" height="6"/>
<rect class="cw" x="733" y="136" width="1" height="10"/>
<rect class="cf" x="732" y="141" width="3" height="1"/>
<rect class="cw" x="737" y="138" width="1" height="6"/>
<rect class="cf" x="736" y="140" width="3" height="2"/>
<rect class="cw" x="741" y="130" width="1" height="15"/>
<rect class="ch" x="740.5" y="136.5" width="2" height="4"/>
<rect class="cw" x="745" y="129" width="1" height="12"/>
<rect class="ch" x="744.5" y="133.5" width="2" height="2"/>
<rect class="cw" x="749" y="130" width="1" height="8"/>
<rect class="cf" x="748" y="133" width="3" height="3"/>
<rect class="ck" x="749" y="134" width="1" height="1"/>
<rect class="cw" x="753" y="132" width="1" height="9"/>
<rect class="cf" x="752" y="136" width="3" height="2"/>
<rect class="cw" x="757" y="132" width="1" height="8"/>
<rect class="cf" x="756" y="136" width="3" height="1"/>
<rect class="cw" x="761" y="120" width="1" height="18"/>
<rect class="cf" x="760" y="134" width="3" height="2"/>
<rect class="cw" x="765" y="126" width="1" height="14"/>
<rect class="ch" x="764.5" y="131.5" width="2" height="4"/>
<rect class="cw" x="769" y="114" width="1" height="28"/>
<rect class="ch" x="768.5" y="116.5" width="2" height="15"/>
<rect class="cw" x="773" y="93" width="1" height="25"/>
<rect class="ch" x="772.5" y="109.5" width="2" height="6"/>
<rect class="cw" x="777" y="104" width="1" height="15"/>
<rect class="cf" x="776" y="108" width="3" height="7"/>
<rect class="ck" x="777" y="109" width="1" height="5"/>
<rect class="cw" x="781" y="108" width="1" height="10"/>
<rect class="ch" x="780.5" y="111.5" width="2" height="2"/>
<rect class="cw" x="785" y="106" width="1" height="12"/>
<rect class="cf" x="784" y="112" width="3" height="1"/>
<polyline points="5.0,337.5 100.0,331.2 125.0,331.0 200.0,329.8 256.0,328.8 330.0,326.0 400.0,323.0 439.0,320.4 478.0,316.5 517.0,312.6 556.0,307.5 595.0,302.8 634.0,299.0 673.0,294.2 704.7,290.3 732.0,286.4 728.0,287.0" fill="none" stroke="#b09a3a" stroke-width="1.1" />
<polyline points="5.0,302.5 37.0,299.0 75.0,296.6 120.0,296.5 200.0,296.6 240.0,299.2 277.0,302.0 317.0,304.4 368.0,304.8 400.0,303.6 423.4,300.9 458.6,295.0 497.7,287.2 536.7,282.5 579.7,277.4 611.0,271.6 642.2,265.7 673.4,260.6 704.7,254.0 736.0,245.0 759.4,240.3 785.0,234.5" fill="none" stroke="#38d0d8" stroke-width="1.1" />
<polyline points="5.0,321.0 37.5,315.0 70.0,308.0 100.0,303.5 130.0,302.8 200.0,301.8 240.0,301.5 262.0,299.4 290.0,298.0 325.0,293.8 368.0,287.5 400.0,284.8 419.5,285.2 439.0,283.3 470.3,279.4 501.6,273.5 525.0,265.7 556.0,257.9 587.5,250.0 611.0,244.2 634.4,234.5 665.6,222.7 697.0,211.0 732.0,197.3 759.4,189.5 785.0,182.5" fill="none" stroke="#000" stroke-width="1.1" />
<line class="tl" x1="229" y1="367.3" x2="842.8" y2="109.8"/>
<line class="tl" x1="670" y1="190.8" x2="839" y2="119.2"/>
<line class="tl" x1="227" y1="453" x2="848.5" y2="414.6"/>
<line class="tl" x1="559" y1="548.2" x2="809.5" y2="526.8"/>
<polyline points="5.0,410.5 12.5,410.5 17.5,409.2 25.0,412.5 35.0,417.0 46.2,416.5 53.2,413.8 61.2,418.0 68.8,418.8 80.0,422.5 85.0,431.2 100.0,430.0 110.0,440.0 125.0,447.5 130.0,441.2 133.8,443.0 150.0,439.5 165.0,435.8 180.0,440.0 188.8,438.8 200.0,441.2 207.5,432.5 210.8,432.0 217.5,438.8 228.8,451.2 238.8,443.0 245.0,442.5 249.5,427.5 249.0,428.0 252.8,429.2 261.5,426.0 265.2,429.2 269.0,426.8 277.8,431.0 289.0,426.0 296.5,426.8 301.5,424.2 306.5,426.0 316.5,424.2 325.2,421.0 329.0,425.5 334.0,421.0 342.8,423.5 349.0,420.0 361.5,425.0 366.5,423.0 374.0,423.8 384.0,422.5 386.5,424.2 394.0,423.0 409.0,424.2 415.2,421.8 425.2,408.5 432.8,409.2 437.8,414.8 447.8,411.0 454.0,413.0 464.0,413.0 470.2,411.8 480.0,413.5 480.0,415.5 487.5,416.8 492.5,415.0 497.5,420.0 505.0,411.0 513.8,411.0 517.5,419.2 530.0,419.2 542.5,424.2 555.0,431.0 562.5,430.5 568.8,428.0 573.8,430.5 578.8,430.0 586.2,419.2 596.2,424.2 603.8,418.8 610.0,420.0 620.0,420.0 625.0,419.2 630.0,421.8 645.0,421.0 651.2,425.0 655.0,424.2 658.8,426.0 666.2,426.0 671.2,416.8 677.5,410.5 686.2,410.5 690.0,412.5 695.0,409.2 705.0,406.0 710.0,415.5 715.0,417.5 720.0,417.5 723.8,420.0 727.5,418.5 732.5,421.8 736.0,421.8 741.6,419.6 748.7,420.7 767.0,418.8 772.6,412.3 778.0,416.8 785.0,416.0" fill="none" stroke="#30c030" stroke-width="1" />
<polyline points="5.0,507.0 15.0,507.0 17.5,506.0 25.0,512.0 35.0,520.2 41.2,521.5 53.2,516.0 61.2,524.0 66.2,525.2 77.5,532.8 82.0,533.2 85.0,548.2 93.8,547.8 97.5,545.2 102.5,549.0 110.0,559.0 125.0,568.2 129.5,554.5 133.8,557.2 140.0,556.5 146.2,552.0 150.0,552.0 153.8,548.5 157.5,548.2 162.5,543.2 166.2,543.2 173.8,548.2 178.8,548.5 182.5,550.2 186.2,550.2 190.0,547.2 193.8,550.2 197.5,550.2 201.2,552.8 205.0,537.8 209.5,532.2 213.8,542.0 217.5,545.2 228.0,565.2 237.8,551.5 245.2,551.0 249.8,527.0 253.5,529.0 261.5,526.0 265.2,530.2 269.5,528.5 272.8,530.2 277.2,535.2 285.2,531.0 289.5,527.0 296.5,527.0 298.5,529.0 301.5,525.2 306.5,528.5 312.8,527.8 317.8,526.0 322.8,522.8 325.2,519.0 329.0,528.5 333.5,521.5 337.8,521.5 342.8,525.2 346.5,524.5 349.8,521.5 354.0,525.2 361.5,530.2 365.8,527.2 370.2,529.5 376.5,527.8 384.0,527.8 387.8,528.5 392.8,527.2 398.2,530.2 404.0,528.5 409.0,529.8 414.0,525.2 419.0,515.2 425.2,503.5 429.0,504.8 434.0,506.0 437.8,516.0 441.5,516.0 449.0,511.5 457.8,515.2 462.8,514.0 474.0,514.5 477.8,514.0 480.0,519.0 480.0,521.5 487.5,522.8 492.5,521.0 497.5,530.2 502.5,517.8 507.5,513.2 512.5,512.8 517.5,530.2 523.8,527.2 530.0,527.8 540.0,533.5 546.2,539.0 552.5,546.5 557.5,548.2 565.0,546.5 569.5,541.0 573.8,545.2 578.8,542.8 582.0,535.2 585.5,521.5 593.8,529.0 597.5,530.2 603.8,523.2 610.0,524.0 620.0,523.5 625.5,521.0 630.0,528.5 645.0,527.8 650.0,536.5 653.8,532.8 657.5,538.5 661.2,535.2 666.2,538.5 671.2,524.0 676.2,510.2 678.8,509.0 685.0,509.0 690.0,513.5 695.0,509.0 701.2,508.2 705.8,506.0 710.0,520.2 713.8,524.0 717.5,524.5 721.2,529.0 725.0,526.5 731.2,531.5 736.0,532.8 744.4,527.0 752.9,531.2 764.0,527.6 769.7,517.7 773.4,513.5 777.6,522.0 781.0,520.0 785.2,521.4" fill="none" stroke="#a84452" stroke-width="1" />
<polyline points="5.0,607.5 8.8,605.0 13.8,604.5 18.8,607.5 22.5,612.5 25.0,618.8 31.2,628.8 37.5,633.8 41.2,636.2 48.8,628.8 53.2,621.2 57.5,632.5 61.2,638.8 66.2,639.5 72.5,650.0 77.5,657.5 81.2,656.2 85.0,675.8 90.0,673.2 93.8,674.2 98.0,665.8 102.0,670.0 110.0,682.5 117.5,686.2 125.0,689.2 129.5,661.2 133.8,666.8 140.0,664.2 146.2,655.8 150.0,655.8 153.8,647.5 157.5,647.0 162.5,637.5 165.0,635.8 170.0,642.0 173.8,652.0 177.5,652.5 182.0,658.0 185.8,658.0 189.5,648.8 193.2,658.0 197.5,658.8 201.2,663.8 205.5,630.0 209.5,623.8 213.0,646.2 217.0,650.8 221.2,665.0 229.5,680.5 237.8,657.5 241.5,654.5 245.2,655.5 249.8,622.5 253.5,626.2 257.8,623.2 261.5,622.0 265.2,630.0 269.5,627.5 273.5,632.5 277.2,642.5 281.5,637.5 285.2,635.0 289.5,627.5 293.5,624.5 297.2,632.5 301.5,624.5 306.0,630.0 310.2,630.0 317.8,627.0 322.0,621.2 325.2,613.8 329.5,634.5 333.5,621.2 337.8,621.8 341.5,631.2 345.8,631.2 349.8,622.5 354.0,631.2 361.5,641.2 365.8,633.8 369.5,639.5 374.0,636.2 381.5,632.0 385.2,638.2 390.2,634.2 394.0,634.5 397.8,642.5 402.8,637.0 405.8,637.5 409.5,642.5 414.0,627.5 417.8,615.0 421.5,605.0 425.2,599.5 429.0,600.8 433.5,602.0 437.2,622.5 441.5,622.5 445.2,617.5 449.0,614.5 453.5,620.0 457.8,623.2 461.5,620.5 467.8,620.0 473.5,623.2 477.0,620.0 480.0,631.2 482.0,638.8 485.5,636.2 489.5,640.0 493.8,632.5 497.5,650.0 502.5,622.5 506.2,616.2 513.2,615.5 517.5,643.8 525.0,638.2 529.5,638.2 533.2,645.0 537.5,648.8 545.5,660.0 549.5,666.2 553.8,670.8 558.8,672.5 565.0,669.5 569.5,652.5 573.0,660.8 577.5,657.5 581.2,643.8 585.5,616.2 589.5,622.5 593.8,632.5 597.0,634.5 601.2,623.8 605.0,621.2 612.5,624.5 617.5,623.8 622.5,621.2 625.0,618.8 629.5,635.5 633.8,632.5 637.5,632.0 642.5,635.5 645.0,633.8 649.5,655.5 653.8,644.5 657.5,655.5 661.2,648.8 665.5,654.5 669.5,630.0 673.8,611.2 677.5,606.2 685.0,606.2 689.5,614.2 693.8,609.2 701.2,607.0 705.8,603.8 710.0,631.2 713.8,638.0 717.5,638.2 721.2,645.0 725.5,639.5 729.5,646.2 733.8,649.5 736.0,647.5 744.4,635.0 754.3,644.0 764.0,633.6 769.7,616.7 773.4,610.2 777.6,626.0 781.0,623.7 785.2,625.2" fill="none" stroke="#c028c8" stroke-width="1" />
<rect x="227" y="564" width="2" height="2" fill="#000"/>
<rect x="559" y="672" width="2" height="1.5" fill="#000"/>
<rect x="571.5" y="660" width="3.5" height="1.5" fill="#000"/>
<rect x="5" y="76" width="186" height="12" fill="#fff"/>
<text class="ax" y="85.700"><tspan x="7" textLength="54" lengthAdjust="spacingAndGlyphs">EURUSD,H1</tspan><tspan x="68.700" textLength="27.300" lengthAdjust="spacingAndGlyphs">1.2624</tspan><tspan x="99.800" textLength="27.300" lengthAdjust="spacingAndGlyphs">1.2632</tspan><tspan x="130.400" textLength="27.300" lengthAdjust="spacingAndGlyphs">1.2614</tspan><tspan x="161.200" textLength="27.300" lengthAdjust="spacingAndGlyphs">1.2622</tspan></text>
<rect x="5" y="380.8" width="75.5" height="13" fill="#fff"/>
<text class="ax" y="392.8"><tspan x="7.500" textLength="31.5" lengthAdjust="spacingAndGlyphs">RSI(26)</tspan><tspan x="45.5" textLength="32.500" lengthAdjust="spacingAndGlyphs">65.1273</tspan></text>
<rect x="5" y="486.8" width="75.5" height="13" fill="#fff"/>
<text class="ax" y="498.8"><tspan x="7.500" textLength="31.5" lengthAdjust="spacingAndGlyphs">RSI(14)</tspan><tspan x="45.5" textLength="32.500" lengthAdjust="spacingAndGlyphs">66.1653</tspan></text>
<rect x="5" y="592.8" width="70.5" height="13" fill="#fff"/>
<text class="ax" y="604.8"><tspan x="7.500" textLength="26.3" lengthAdjust="spacingAndGlyphs">RSI(7)</tspan><tspan x="40.5" textLength="32.500" lengthAdjust="spacingAndGlyphs">67.8484</tspan></text>
<rect x="985" y="107" width="34" height="11" fill="#000"/>
<text class="ax" x="988.500" y="116" textLength="26.500" lengthAdjust="spacingAndGlyphs" style="fill:#fff;stroke:#fff">1.2622</text>
<rect x="727.5" y="253.5" width="241" height="89" fill="none" stroke="#000" stroke-width="1" shape-rendering="crispEdges"/>
<rect x="737" y="259.5" width="207" height="16" fill="#fff"/>
<rect x="737" y="275.5" width="219" height="16" fill="#fff"/>
<rect x="737" y="291.5" width="220" height="16" fill="#fff"/>
<rect x="737" y="307.5" width="208" height="16" fill="#fff"/>
<rect x="737" y="323.5" width="72" height="16" fill="#fff"/>
<text class="note" x="736.500" y="273.2">歐元是持續向上攻擊的型態.</text>
<text class="note" x="736.500" y="289.2">我提出1.2620是可能的大壓力</text>
<text class="note" x="736.500" y="305.2">區未來可能會進入另一個盤整</text>
<text class="note" x="736.500" y="321.2">階段的看法.也必須要跌破上</text>
<text class="note" x="736.500" y="337.2">升趨勢線.</text>
<path class="b" d="M4.5 378.5V75.5H982.5V378.5Z"/>
<path class="b" d="M4.5 484.5V380.5H982.5V484.5Z"/>
<path class="b" d="M4.5 590.5V486.5H982.5V590.5Z"/>
<path class="b" d="M4.5 696.5V592.5H982.5V696.5Z"/>
<line class="b" x1="982" y1="85.5" x2="985" y2="85.5"/>
<text class="ax" x="985.500" y="88" textLength="26.500" lengthAdjust="spacingAndGlyphs">1.2665</text>
<line class="b" x1="982" y1="117.5" x2="985" y2="117.5"/>
<text class="ax" x="985.500" y="120" textLength="26.500" lengthAdjust="spacingAndGlyphs">1.2615</text>
<line class="b" x1="982" y1="149.5" x2="985" y2="149.5"/>
<text class="ax" x="985.500" y="152" textLength="26.500" lengthAdjust="spacingAndGlyphs">1.2565</text>
<line class="b" x1="982" y1="182.5" x2="985" y2="182.5"/>
<text class="ax" x="985.500" y="185" textLength="26.500" lengthAdjust="spacingAndGlyphs">1.2515</text>
<line class="b" x1="982" y1="214.5" x2="985" y2="214.5"/>
<text class="ax" x="985.500" y="217" textLength="26.500" lengthAdjust="spacingAndGlyphs">1.2465</text>
<line class="b" x1="982" y1="246.5" x2="985" y2="246.5"/>
<text class="ax" x="985.500" y="249" textLength="26.500" lengthAdjust="spacingAndGlyphs">1.2415</text>
<line class="b" x1="982" y1="278.5" x2="985" y2="278.5"/>
<text class="ax" x="985.500" y="281" textLength="26.500" lengthAdjust="spacingAndGlyphs">1.2365</text>
<line class="b" x1="982" y1="310.5" x2="985" y2="310.5"/>
<text class="ax" x="985.500" y="313" textLength="26.500" lengthAdjust="spacingAndGlyphs">1.2315</text>
<line class="b" x1="982" y1="342.5" x2="985" y2="342.5"/>
<text class="ax" x="985.500" y="345" textLength="26.500" lengthAdjust="spacingAndGlyphs">1.2265</text>
<line class="b" x1="982" y1="374.5" x2="985" y2="374.5"/>
<text class="ax" x="985.500" y="377" textLength="26.500" lengthAdjust="spacingAndGlyphs">1.2215</text>
<text class="ax" x="985.500" y="387" textLength="14.5" lengthAdjust="spacingAndGlyphs">100</text>
<line class="b" x1="982" y1="406.5" x2="985" y2="406.5"/>
<text class="ax" x="985.500" y="409" textLength="10" lengthAdjust="spacingAndGlyphs">75</text>
<line class="b" x1="982" y1="432.5" x2="985" y2="432.5"/>
<text class="ax" x="985.500" y="435" textLength="10" lengthAdjust="spacingAndGlyphs">50</text>
<line class="b" x1="982" y1="458.5" x2="985" y2="458.5"/>
<text class="ax" x="985.500" y="461" textLength="10" lengthAdjust="spacingAndGlyphs">25</text>
<text class="ax" x="985.500" y="482" textLength="5" lengthAdjust="spacingAndGlyphs">0</text>
<text class="ax" x="985.500" y="493" textLength="14.5" lengthAdjust="spacingAndGlyphs">100</text>
<line class="b" x1="982" y1="512.5" x2="985" y2="512.5"/>
<text class="ax" x="985.500" y="515" textLength="10" lengthAdjust="spacingAndGlyphs">75</text>
<line class="b" x1="982" y1="538.5" x2="985" y2="538.5"/>
<text class="ax" x="985.500" y="541" textLength="10" lengthAdjust="spacingAndGlyphs">50</text>
<line class="b" x1="982" y1="564.5" x2="985" y2="564.5"/>
<text class="ax" x="985.500" y="567" textLength="10" lengthAdjust="spacingAndGlyphs">25</text>
<text class="ax" x="985.500" y="588" textLength="5" lengthAdjust="spacingAndGlyphs">0</text>
<text class="ax" x="985.500" y="599" textLength="14.5" lengthAdjust="spacingAndGlyphs">100</text>
<line class="b" x1="982" y1="618.5" x2="985" y2="618.5"/>
<text class="ax" x="985.500" y="621" textLength="10" lengthAdjust="spacingAndGlyphs">75</text>
<line class="b" x1="982" y1="644.5" x2="985" y2="644.5"/>
<text class="ax" x="985.500" y="647" textLength="10" lengthAdjust="spacingAndGlyphs">50</text>
<line class="b" x1="982" y1="670.5" x2="985" y2="670.5"/>
<text class="ax" x="985.500" y="673" textLength="10" lengthAdjust="spacingAndGlyphs">25</text>
<text class="ax" x="985.500" y="694" textLength="5" lengthAdjust="spacingAndGlyphs">0</text>
<line class="b" x1="5.5" y1="696" x2="5.5" y2="701"/>
<text class="ax" x="4" y="709.100" textLength="47.5" lengthAdjust="spacingAndGlyphs">8 Oct 15:00</text>
<line class="b" x1="69.5" y1="696" x2="69.5" y2="701"/>
<text class="ax" x="68" y="709.100" textLength="52" lengthAdjust="spacingAndGlyphs">11 Oct 11:00</text>
<line class="b" x1="133.5" y1="696" x2="133.5" y2="701"/>
<text class="ax" x="132" y="709.100" textLength="52" lengthAdjust="spacingAndGlyphs">12 Oct 13:00</text>
<line class="b" x1="197.5" y1="696" x2="197.5" y2="701"/>
<text class="ax" x="196" y="709.100" textLength="52" lengthAdjust="spacingAndGlyphs">13 Oct 05:00</text>
<line class="b" x1="261.5" y1="696" x2="261.5" y2="701"/>
<text class="ax" x="260" y="709.100" textLength="52" lengthAdjust="spacingAndGlyphs">13 Oct 21:00</text>
<line class="b" x1="325.5" y1="696" x2="325.5" y2="701"/>
<text class="ax" x="324" y="709.100" textLength="52" lengthAdjust="spacingAndGlyphs">14 Oct 13:00</text>
<line class="b" x1="389.5" y1="696" x2="389.5" y2="701"/>
<text class="ax" x="388" y="709.100" textLength="52" lengthAdjust="spacingAndGlyphs">15 Oct 05:00</text>
<line class="b" x1="453.5" y1="696" x2="453.5" y2="701"/>
<text class="ax" x="452" y="709.100" textLength="52" lengthAdjust="spacingAndGlyphs">18 Oct 01:00</text>
<line class="b" x1="517.5" y1="696" x2="517.5" y2="701"/>
<text class="ax" x="516" y="709.100" textLength="52" lengthAdjust="spacingAndGlyphs">18 Oct 17:00</text>
<line class="b" x1="581.5" y1="696" x2="581.5" y2="701"/>
<text class="ax" x="580" y="709.100" textLength="52" lengthAdjust="spacingAndGlyphs">19 Oct 09:00</text>
<line class="b" x1="645.5" y1="696" x2="645.5" y2="701"/>
<text class="ax" x="644" y="709.100" textLength="52" lengthAdjust="spacingAndGlyphs">20 Oct 01:00</text>
<line class="b" x1="709.5" y1="696" x2="709.5" y2="701"/>
<text class="ax" x="708" y="709.100" textLength="52" lengthAdjust="spacingAndGlyphs">20 Oct 17:00</text>
<line class="b" x1="773.5" y1="696" x2="773.5" y2="701"/>
<text class="ax" x="772" y="709.100" textLength="52" lengthAdjust="spacingAndGlyphs">21 Oct 09:00</text>
<rect x="3" y="7" width="14" height="11" fill="#fff" stroke="#ffe848" stroke-width="1.5"/>
<g fill="#2430b0" shape-rendering="crispEdges"><rect x="6" y="11" width="1" height="4"/><rect x="7.500" y="10" width="1" height="3"/><rect x="9" y="10" width="1" height="5"/><rect x="11" y="12" width="1" height="3"/><rect x="12.500" y="11" width="1" height="5"/><rect x="14" y="13" width="1" height="3"/></g>
<text y="17.500" style="font-size:13px;font-weight:bold;fill:#000"><tspan x="22.500" textLength="51" lengthAdjust="spacingAndGlyphs">127713:</tspan><tspan x="79.500" textLength="65.500" lengthAdjust="spacingAndGlyphs">MetaTrader</tspan><tspan x="153.800">-</tspan><tspan x="163.800" textLength="78.500" lengthAdjust="spacingAndGlyphs">[EURUSD,H1]</tspan></text>
<rect x="955.5" y="2.5" width="20" height="20" rx="3.5" fill="url(#bg1)" stroke="#4a2406" stroke-width="1.2"/>
<rect x="978.5" y="2.5" width="20" height="20" rx="3.5" fill="url(#bg1)" stroke="#4a2406" stroke-width="1.2"/>
<rect x="1001.5" y="2.5" width="20" height="20" rx="3.5" fill="url(#bg2)" stroke="#4a2406" stroke-width="1.2"/>
<rect x="960" y="15" width="7" height="3" fill="#000"/>
<rect x="984" y="8.5" width="9.5" height="9" fill="none" stroke="#000" stroke-width="1.4"/><rect x="983.3" y="7.5" width="10.9" height="3" fill="#000"/>
<path d="M1006.5 7.5l10 10M1016.5 7.5l-10 10" stroke="#101018" stroke-width="2" fill="none"/>
<rect x="5.5" y="29.5" width="13" height="11" fill="#fff" stroke="#ffe848" stroke-width="1.4"/>
<g fill="#2430b0" shape-rendering="crispEdges"><rect x="8" y="33" width="1" height="4"/><rect x="9.500" y="32" width="1" height="4"/><rect x="11" y="33" width="1" height="5"/><rect x="13" y="34" width="1" height="3"/><rect x="14.500" y="33" width="1" height="5"/><rect x="16" y="35" width="1" height="3"/></g>
<text class="mn" x="26" y="39.400">文件(F)</text>
<text class="mn" x="80" y="39.400">顯視(V)</text>
<text class="mn" x="136" y="39.400">插入(I)</text>
<text class="mn" x="189" y="39.400">圖表(C)</text>
<text class="mn" x="244" y="39.400">工具(T)</text>
<text class="mn" x="299" y="39.400">窗口(W)</text>
<text class="mn" x="361" y="39.400">幫助(H)</text>
<rect x="971.5" y="28.5" width="15" height="15" fill="#181822" stroke="#23232e"/>
<rect x="989.5" y="28.5" width="15" height="15" fill="#181822" stroke="#23232e"/>
<rect x="1007.5" y="28.5" width="15" height="15" fill="#181822" stroke="#23232e"/>
<rect x="975" y="37" width="6" height="2" fill="#a8a8b0"/>
<path d="M994.5 33.5h6v5M992.5 35.5h6v4.5h-6z" stroke="#a8a8b0" stroke-width="1.3" fill="none"/>
<path d="M1011 31.5l7 7M1018 31.5l-7 7" stroke="#b0b0b8" stroke-width="1.8" fill="none"/>
<rect x="0" y="44.500" width="1024" height="1.500" fill="#06070c"/><line class="sep" x1="0" y1="46.500" x2="1024" y2="46.500"/>
<line class="sep" x1="3.5" y1="49" x2="3.5" y2="69"/>
<line class="sep" x1="78.5" y1="49" x2="78.5" y2="69"/>
<line class="sep" x1="153.5" y1="49" x2="153.5" y2="69"/>
<line class="sep" x1="182.5" y1="49" x2="182.5" y2="69"/>
<line class="sep" x1="209.5" y1="49" x2="209.5" y2="69"/>
<line class="sep" x1="214.5" y1="49" x2="214.5" y2="69"/>
<line class="sep" x1="215.5" y1="49" x2="215.5" y2="69"/>
<line class="sep" x1="289.5" y1="49" x2="289.5" y2="69"/>
<line class="sep" x1="341.5" y1="49" x2="341.5" y2="69"/>
<line class="sep" x1="416.5" y1="49" x2="416.5" y2="69"/>
<line class="sep" x1="467.5" y1="49" x2="467.5" y2="69"/>
<line class="sep" x1="471.5" y1="49" x2="471.5" y2="69"/>
<line class="sep" x1="473.5" y1="49" x2="473.5" y2="69"/>
<line class="sep" x1="662.5" y1="49" x2="662.5" y2="69"/>
<line class="sep" x1="664.5" y1="49" x2="664.5" y2="69"/>
<line class="sep" x1="668.5" y1="49" x2="668.5" y2="69"/>
<line class="sep" x1="719.5" y1="49" x2="719.5" y2="69"/>
<line class="sep" x1="840.5" y1="49" x2="840.5" y2="69"/>
<line class="sep" x1="915.5" y1="49" x2="915.5" y2="69"/>
<line class="sep" x1="967.5" y1="49" x2="967.5" y2="69"/>
<line class="sep" x1="994.5" y1="49" x2="994.5" y2="69"/>
<rect x="241.5" y="48.5" width="23" height="21" fill="#0c0c14" stroke="#2a2a36"/>
<rect x="345.5" y="48.5" width="22" height="21" fill="#0c0c14" stroke="#2a2a36"/>
<rect x="369.5" y="48.5" width="22" height="21" fill="#0c0c14" stroke="#2a2a36"/>
<rect x="392.5" y="48.5" width="22" height="21" fill="#0c0c14" stroke="#2a2a36"/>
<rect x="567.5" y="48.5" width="22" height="21" fill="#0c0c14" stroke="#2a2a36"/>
<rect x="670.5" y="48.5" width="23" height="21" fill="#0c0c14" stroke="#2a2a36"/>
<path d="M13.5 51.5h7l3 3v9.5h-10z" fill="#000" stroke="#fff" stroke-width="1.2"/><path d="M20.5 51.5v3h3" fill="none" stroke="#fff" stroke-width="1"/>
<rect x="34.5" y="51.5" width="13" height="13" fill="#8c8cec" stroke="#c4c4fc" stroke-width="1"/><rect x="37.5" y="52.5" width="8" height="5" fill="#1c1c30"/><rect x="37.5" y="60.5" width="8" height="3.5" fill="#fff"/><rect x="43" y="61" width="2" height="3" fill="#000"/><path d="M47.500 51.500v13h-13" fill="none" stroke="#fff" stroke-width="1"/>
<path d="M59.5 56.5l2-5h8l-2 5M56.5 57.5c0-1 1-1.5 2-1.5h10c1.5 0 2.500 .5 2.500 1.500v4.500h-14.500zM57.500 62.500v1.500h12v-1.500M58 59.500h11" fill="none" stroke="#fff" stroke-width="1.2"/>
<line x1="91" y1="54.5" x2="100" y2="54.5" stroke="#fff" stroke-width="1" stroke-dasharray="1 1" shape-rendering="crispEdges"/>
<path d="M85.500 55.5l1.700-2l1.700 2z" fill="#e8e040"/>
<line x1="91" y1="57.5" x2="100" y2="57.5" stroke="#fff" stroke-width="1" stroke-dasharray="1 1" shape-rendering="crispEdges"/>
<path d="M85.500 56.5l1.700 2l1.700-2z" fill="#30d890"/>
<line x1="91" y1="60.5" x2="100" y2="60.5" stroke="#fff" stroke-width="1" stroke-dasharray="1 1" shape-rendering="crispEdges"/>
<path d="M85.500 61.5l1.700-2l1.700 2z" fill="#e8e040"/>
<line x1="91" y1="63.5" x2="100" y2="63.5" stroke="#fff" stroke-width="1" stroke-dasharray="1 1" shape-rendering="crispEdges"/>
<path d="M85.500 62.5l1.700 2l1.700-2z" fill="#30d0d0"/>
<path d="M109.500 52.500h3.500l1 1.500h5.500v5.500h-10z" fill="#1a2690" stroke="#3446c0" stroke-width="1"/><path d="M113.500 59.500v4.500h3M118 62h4.500v2.500" fill="none" stroke="#e8e8f0" stroke-width="1.200"/>
<rect x="134.500" y="51.500" width="9" height="7.500" fill="#181820" stroke="#fff" stroke-width="1.100"/><rect x="136.500" y="53.500" width="4.500" height="3.500" fill="#e05878"/><path d="M144.500 52.500l1 1v6l-1 1" fill="none" stroke="#fff" stroke-width="1"/><path d="M133.500 60.500h11.500l-1.500 3.500h-12z" fill="#fff"/><path d="M133 62h11" stroke="#181820" stroke-width=".8" stroke-dasharray="1 1"/>
<rect x="160.500" y="55.500" width="11" height="9" fill="#101018" stroke="#fff" stroke-width="1.5"/><path d="M163 58.500h6M163 61.500h6" stroke="#fff" stroke-width="1.2"/><path d="M164 55l3-3.500 3 3M169 52.500h5v3.500" fill="none" stroke="#fff" stroke-width="1.3"/>
<path d="M190.500 59l9-7 4 4.500-9 7z" fill="#101018" stroke="#fff" stroke-width="1"/><path d="M195 60l8-8" stroke="#4868ff" stroke-width="2.2"/><path d="M192 60.500l6-5M194 62.500l6-5" stroke="#e8e8a0" stroke-width=".8"/>
<path d="M229.500 51v13M229.500 54h3M226 61.500h3.500" stroke="#5c5c6c" stroke-width="1.400" fill="none"/>
<path d="M252.500 52v14" stroke="#9a9aa4" stroke-width="1.200"/><rect x="250" y="55.500" width="5" height="7" fill="#9a9aa4"/>
<path d="M270 63l3.500-8 3 6 4-9" stroke="#5c5c6c" stroke-width="1.400" fill="none"/>
<path d="M302.0 52h5l4 4v5l-4 4h-5l-4-4v-5z" fill="none" stroke="#fff" stroke-width="1.200"/>
<path d="M301.0 58.500h7" stroke="#fff" stroke-width="1.300"/>
<path d="M304.5 55v7" stroke="#fff" stroke-width="1.300"/>
<path d="M325.0 52h5l4 4v5l-4 4h-5l-4-4v-5z" fill="none" stroke="#fff" stroke-width="1.200"/>
<path d="M324.0 58.500h7" stroke="#fff" stroke-width="1.300"/>
<path d="M356.500 52.500l6.500 6.500-6.500 6.500z" fill="#fff"/><g stroke="#fff" stroke-width="1" shape-rendering="crispEdges"><path d="M352 54.500h5M352 56.500h5M352 58.500h5M352 60.500h5M352 62.500h5"/></g>
<g shape-rendering="crispEdges"><rect x="374" y="53" width="1" height="13" fill="#fff"/><rect x="377" y="53" width="1" height="13" fill="#fff"/><path d="M380.500 53v13" stroke="#fff" stroke-width="1" stroke-dasharray="2 1"/></g><path d="M382 56.500l3.500-3v6zM382 62.500l3.500-3v6z" fill="#f0e840"/><path d="M385 56.500h2.500M385 62.500h2.500" stroke="#f0e840" stroke-width="1.400"/>
<rect x="400.500" y="52" width="5" height="3" fill="#fff"/><rect x="398.500" y="54.600" width="9.300" height="1.600" fill="#fff"/><rect x="400.500" y="56.600" width="5.500" height="5.400" fill="#b4b4bc"/><rect x="401.500" y="57.600" width="1.500" height="1.200" fill="#202028"/><rect x="404" y="57.600" width="1.500" height="1.200" fill="#202028"/><rect x="402" y="60.200" width="2.500" height="1" fill="#202028"/><path d="M396 65.500l3.500-2.500h7l3.500 2.500" fill="none" stroke="#e8e050" stroke-width="1.700" stroke-dasharray="1.200 .8"/>
<rect x="423" y="51.5" width="14" height="12.5" fill="#fff"/><rect x="423" y="51.5" width="14" height="2.600" fill="#f0e840"/><rect x="424.5" y="55.0" width="11" height="7.5" fill="none" stroke="#3840a8" stroke-width=".6"/>
<g fill="#2430b0" shape-rendering="crispEdges"><rect x="426" y="57.5" width="1" height="3"/><rect x="428" y="56.5" width="1" height="3"/><rect x="430" y="57.5" width="1" height="4"/><rect x="432" y="56.5" width="1" height="3"/><rect x="433.5" y="58.5" width="1" height="3"/></g>
<rect x="450.500" y="55.500" width="12" height="10" fill="#121521" stroke="#e8e8e8" stroke-width="1.100"/>
<rect x="446.5" y="51.5" width="13.5" height="11.5" fill="#fff"/><rect x="446.5" y="51.5" width="13.5" height="2.600" fill="#f0e840"/><rect x="448.0" y="55.0" width="10.5" height="6.5" fill="none" stroke="#3840a8" stroke-width=".6"/>
<g fill="#2430b0" shape-rendering="crispEdges"><rect x="449.5" y="57.5" width="1" height="3"/><rect x="451.5" y="56.5" width="1" height="3"/><rect x="453.5" y="57.5" width="1" height="4"/><rect x="455.5" y="56.5" width="1" height="3"/><rect x="457.0" y="58.5" width="1" height="3"/></g>
<text class="tf" x="480.7" y="63" textLength="10" lengthAdjust="spacingAndGlyphs">M1</text>
<text class="tf" x="502.8" y="63" textLength="11.2" lengthAdjust="spacingAndGlyphs">M5</text>
<text class="tf" x="525" y="63" textLength="13.2" lengthAdjust="spacingAndGlyphs">M15</text>
<text class="tf" x="547.7" y="63" textLength="14.4" lengthAdjust="spacingAndGlyphs">M30</text>
<text class="tf" x="574" y="64" textLength="9.6" lengthAdjust="spacingAndGlyphs">H1</text>
<text class="tf" x="596" y="63" textLength="11" lengthAdjust="spacingAndGlyphs">H4</text>
<text class="tf" x="618.6" y="63" textLength="10" lengthAdjust="spacingAndGlyphs">D1</text>
<text class="tf" x="640" y="63" textLength="12.4" lengthAdjust="spacingAndGlyphs">W1</text>
<path d="M679.500 51.500v11l2.500-2.500 2 5 2-1-2-4.500h3.500z" fill="#fff"/>
<path d="M705.500 52v5M705.500 60v5M699 58.500h5M707 58.500h5" stroke="#fff" stroke-width="1.200"/>
<path d="M733.500 52v13" stroke="#fff" stroke-width="1.300"/><path d="M751 58.500h12" stroke="#fff" stroke-width="1.300"/><path d="M774 65l13-13.500" stroke="#fff" stroke-width="1.200"/>
<path d="M797.500 63l9-10M801.500 65l9-10" stroke="#fff" stroke-width="1.200"/>
<path d="M821 64.500l8-12M821 64.500l11-10M821 64.500l12-5.500M821 64.500l12-1.500M821 64.500l4-12" stroke="#fff" stroke-width="1"/>
<line x1="848" y1="53.5" x2="862" y2="53.5" stroke="#fff" stroke-width="1" stroke-dasharray="1 1" shape-rendering="crispEdges"/>
<line x1="848" y1="57.5" x2="862" y2="57.5" stroke="#fff" stroke-width="1" stroke-dasharray="1 1" shape-rendering="crispEdges"/>
<line x1="848" y1="60.5" x2="862" y2="60.5" stroke="#fff" stroke-width="1" stroke-dasharray="1 1" shape-rendering="crispEdges"/>
<line x1="848" y1="64.5" x2="862" y2="64.5" stroke="#fff" stroke-width="1" stroke-dasharray="1 1" shape-rendering="crispEdges"/>
<path d="M872.500 64.500l11-13M872.500 64.500l13-7M872.500 64.500l7-5" stroke="#fff" stroke-width="1.100"/>
<path d="M896 65l4-7 4-7M894 53c2 3 4 5 6 5 3 0 5-1 8-4M898 55.500l10 4" stroke="#fff" stroke-width="1.100" fill="none"/>
<text x="925.5" y="64.5" style="font-size:13px;fill:#fff;font-weight:bold">A</text>
<path d="M949.500 52.500l3.500 3.500h-7zM956.500 65l3.500-3.500h-7z" fill="#fff"/><path d="M948.500 59l2.500 2.500 5-5.500" stroke="#fff" stroke-width="1.300" fill="none"/>
<text x="976" y="62.500" style="font-family:'Liberation Serif',serif;font-style:italic;font-weight:bold;font-size:10.5px;fill:#fff">ff</text>
<text x="3" y="730" class="mn">幫助請按F1</text>
<rect x="930" y="718" width="74" height="15.800" fill="#c010c4"/>
<path d="M404.5 733.800V718.500H477" fill="none" stroke="#4a4e5c" shape-rendering="crispEdges"/>
<text class="st" x="408.2" y="730" textLength="32.8" lengthAdjust="spacingAndGlyphs">Default</text>
<path d="M479.5 733.800V718.500H578" fill="none" stroke="#4a4e5c" shape-rendering="crispEdges"/>
<text class="st" x="484" y="730" textLength="83.8" lengthAdjust="spacingAndGlyphs">2004.10.21 11:00</text>
<path d="M582.5 733.800V718.500H649" fill="none" stroke="#4a4e5c" shape-rendering="crispEdges"/>
<text class="st" x="585.6" y="730" textLength="45.3" lengthAdjust="spacingAndGlyphs">O: 1.2620</text>
<path d="M653.5 733.800V718.500H721" fill="none" stroke="#4a4e5c" shape-rendering="crispEdges"/>
<text class="st" x="656.5" y="730" textLength="45.5" lengthAdjust="spacingAndGlyphs">H: 1.2629</text>
<path d="M724.5 733.800V718.500H789" fill="none" stroke="#4a4e5c" shape-rendering="crispEdges"/>
<text class="st" x="728.4" y="730" textLength="43.7" lengthAdjust="spacingAndGlyphs">L: 1.2615</text>
<path d="M793.5 733.800V718.500H860" fill="none" stroke="#4a4e5c" shape-rendering="crispEdges"/>
<text class="st" x="797" y="730" textLength="44.4" lengthAdjust="spacingAndGlyphs">C: 1.2624</text>
<path d="M864.5 733.800V718.500H926" fill="none" stroke="#4a4e5c" shape-rendering="crispEdges"/>
<text class="st" x="868" y="730" textLength="24" lengthAdjust="spacingAndGlyphs">V: 83</text>
<path d="M929.5 733.800V718.500H1004" fill="none" stroke="#4a4e5c" shape-rendering="crispEdges"/>
<text class="st" x="933.7" y="730" textLength="43.7" lengthAdjust="spacingAndGlyphs">197/0 kb</text>
<path d="M1010 734l12-12M1014 734l8-8M1018 734l4-4" stroke="#5a5e6c" stroke-width="1.300"/>
</svg></body></html>
